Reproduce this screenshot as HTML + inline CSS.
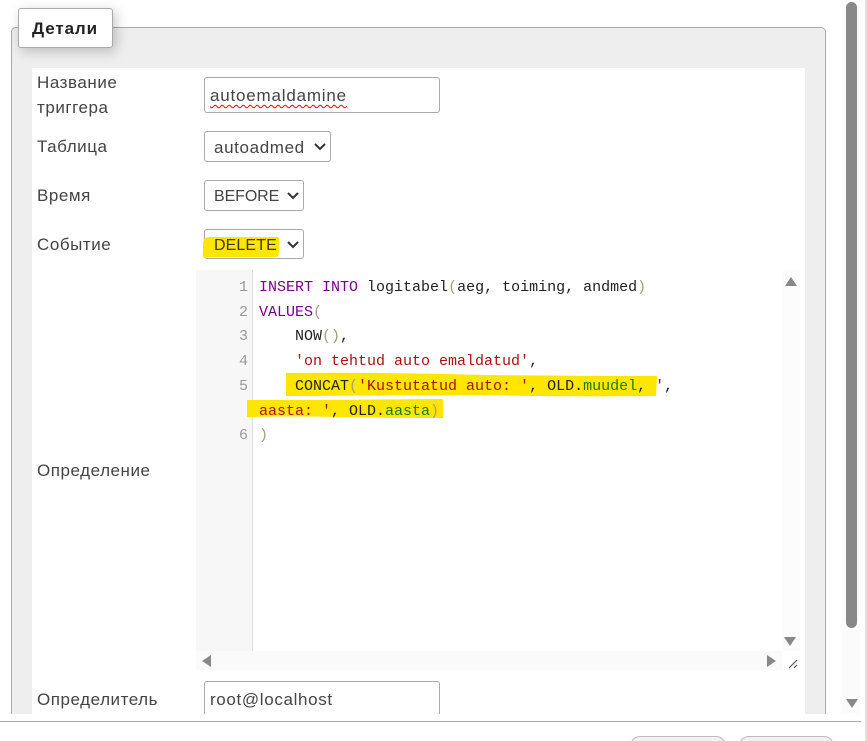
<!DOCTYPE html>
<html lang="ru">
<head>
<meta charset="utf-8">
<style>
html,body{margin:0;padding:0;width:867px;height:741px;overflow:hidden;background:#fff}
body{position:relative;font-family:"Liberation Sans",sans-serif;color:#444;font-size:16px}
.a{position:absolute}
.lbl{position:absolute;left:37px;font-size:17px;letter-spacing:.55px;line-height:25px;white-space:nowrap;color:#444}
.box{position:absolute;box-sizing:border-box;background:#fff;border:1px solid #aaa;border-radius:3px;color:#444;font-size:17px;letter-spacing:.3px;white-space:nowrap}
.code{position:absolute;font-family:"Liberation Mono",monospace;font-size:15px;line-height:24.7px;white-space:pre;color:#222}
.k{color:#708}.s{color:#a11}.b{color:#a89f80}.v{color:#1a7a1a}
.n{position:absolute;width:48px;left:200px;text-align:right;font-family:"Liberation Mono",monospace;font-size:15px;line-height:24.7px;color:#999}
.hl{position:absolute;background:#ffe600}
</style>
</head>
<body>
<!-- fieldset -->
<div class="a" style="left:11px;top:27px;width:815px;height:687px;box-sizing:border-box;background:#eee;border:1px solid #aaa;border-bottom:0;border-radius:5px 5px 0 0"></div>
<div class="a" style="left:32px;top:68px;width:773px;height:646px;background:#fff"></div>
<!-- legend -->
<div class="a" style="left:18px;top:8px;width:95px;height:40px;box-sizing:border-box;background:#fff;border:1px solid #aaa;border-radius:3px;box-shadow:3px 3px 12px rgba(0,0,0,.22);font-weight:bold;font-size:17px;letter-spacing:.9px;color:#222;line-height:39px;padding-left:13px">Детали</div>

<div class="lbl" style="top:70px">Название</div>
<div class="lbl" style="top:95px">триггера</div>
<div class="lbl" style="top:134px">Таблица</div>
<div class="lbl" style="top:183px">Время</div>
<div class="lbl" style="top:232px">Событие</div>
<div class="lbl" style="top:458px">Определение</div>
<div class="lbl" style="top:687px">Определитель</div>

<div class="box" style="left:204px;top:77px;width:236px;height:36px;line-height:35px;padding-left:5px;letter-spacing:.8px;text-decoration:underline wavy #f00 1px;text-underline-offset:3px">autoemaldamine</div>

<div class="box" style="left:204px;top:131px;width:127px;height:31px;line-height:31px;padding-left:9px;letter-spacing:.63px">autoadmed</div>
<svg class="a" style="left:313px;top:142px" width="14" height="10" viewBox="0 0 14 10"><path d="M2 2l5 5 5-5" fill="none" stroke="#333" stroke-width="2"/></svg>
<div class="box" style="left:204px;top:180px;width:100px;height:31px;line-height:31px;padding-left:9px;font-size:16px;letter-spacing:-.1px">BEFORE</div>
<svg class="a" style="left:286px;top:191px" width="14" height="10" viewBox="0 0 14 10"><path d="M2 2l5 5 5-5" fill="none" stroke="#333" stroke-width="2"/></svg>
<div class="box" style="left:204px;top:229px;width:100px;height:30px"></div>
<div class="hl" style="left:203px;top:237px;width:76px;height:20px;border-radius:6px 2px 3px 2px;transform:skewX(-2deg)"></div>
<div class="a" style="left:214px;top:230px;font-size:16px;letter-spacing:.1px;line-height:31px;color:#3a3a1a">DELETE</div>
<svg class="a" style="left:286px;top:240px" width="14" height="10" viewBox="0 0 14 10"><path d="M2 2l5 5 5-5" fill="none" stroke="#333" stroke-width="2"/></svg>

<!-- editor -->
<div class="a" style="left:196px;top:270px;width:57px;height:381px;box-sizing:border-box;background:#f7f7f7;border-right:1px solid #ddd"></div>
<div class="a" style="left:782px;top:270px;width:18px;height:381px;background:#fcfcfc"></div>
<div class="a" style="left:196px;top:651px;width:586px;height:19px;background:#fafafa"></div>

<svg class="a" style="left:245px;top:370px" width="415" height="52" viewBox="0 0 415 52"><path d="M41 3q100-1 200 2q90 1 171 1l-1 20q-90 1-170-1l-200 1zM2 30q100 0 196-1l0 19q-60 0-100-1q-50-1-96 0z" fill="#ffe600"/></svg>

<div class="n" style="top:276px">1</div>
<div class="n" style="top:301px">2</div>
<div class="n" style="top:325px">3</div>
<div class="n" style="top:350px">4</div>
<div class="n" style="top:375px">5</div>
<div class="n" style="top:424px">6</div>

<div class="code" style="left:259px;top:276px"><span class="k">INSERT</span> <span class="k">INTO</span> logitabel<span class="b">(</span>aeg, toiming, andmed<span class="b">)</span>
<span class="k">VALUES</span><span class="b">(</span>
    NOW<span class="b">()</span>,
    <span class="s">'on tehtud auto emaldatud'</span>,
    CONCAT<span class="b">(</span><span class="s">'Kustutatud auto: '</span>, OLD.<span class="v">muudel</span>, <span class="s">'</span>,
<span class="s">aasta: '</span>, OLD.<span class="v">aasta</span><span class="b">)</span>
<span class="b">)</span></div>

<!-- editor arrows -->
<svg class="a" style="left:784px;top:276px" width="14" height="11"><path d="M7 1l6 9H1z" fill="#888"/></svg>
<svg class="a" style="left:783px;top:636px" width="14" height="11"><path d="M1 1h12l-6 9z" fill="#888"/></svg>
<svg class="a" style="left:201px;top:654px" width="11" height="14"><path d="M10 1v12L1 7z" fill="#888"/></svg>
<svg class="a" style="left:766px;top:654px" width="11" height="14"><path d="M1 1v12l9-6z" fill="#888"/></svg>
<svg class="a" style="left:788px;top:659px" width="11" height="10"><path d="M1 9L9 1M6 9l3-3" fill="none" stroke="#555" stroke-width="1.2"/></svg>

<div class="box" style="left:204px;top:681px;width:236px;height:40px;line-height:36px;padding-left:5px;letter-spacing:.65px">root@localhost</div>

<!-- clip bottom -->
<div class="a" style="left:0;top:714px;width:867px;height:27px;background:#fff"></div>
<div class="a" style="left:0;top:721px;width:861px;height:1px;background:#aaa"></div>
<div class="a" style="left:630px;top:736px;width:96px;height:20px;box-sizing:border-box;background:#f2f2f2;border:1px solid #bbb;border-radius:12px"></div>
<div class="a" style="left:739px;top:736px;width:95px;height:20px;box-sizing:border-box;background:#f2f2f2;border:1px solid #bbb;border-radius:12px"></div>

<!-- page scrollbar -->
<div class="a" style="left:842px;top:0;width:18px;height:713px;background:#fbfbfb"></div>
<div class="a" style="left:846px;top:2px;width:11px;height:626px;background:#888;border-radius:6px"></div>
<svg class="a" style="left:845px;top:698px" width="14" height="11"><path d="M1 1h12l-6 9z" fill="#888"/></svg>
<div class="a" style="left:865px;top:0;width:2px;height:741px;background:#e4e4e4"></div>
</body>
</html>
